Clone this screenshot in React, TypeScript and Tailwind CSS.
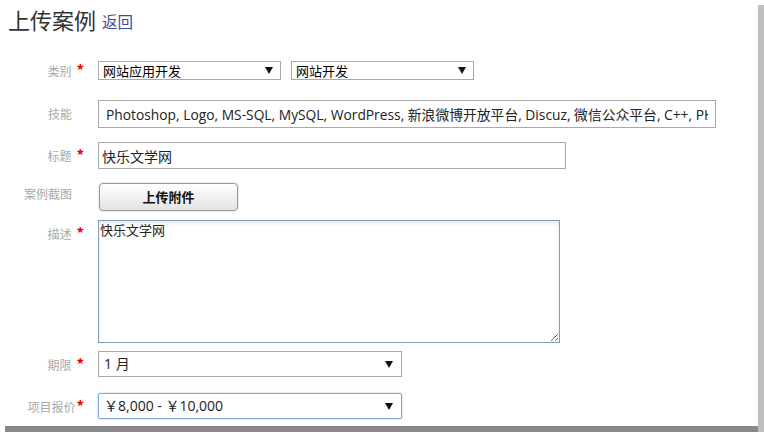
import React from 'react'

const cjk = "font-['Microsoft_YaHei','Noto_Sans_CJK_SC',sans-serif]"

function Arrow() {
  return (
    <svg width="8" height="7" viewBox="0 0 8 7" className="shrink-0">
      <polygon points="0,0 8,0 4,7" fill="#111" />
    </svg>
  )
}

function Label({ text, star, tight }: { text: string; star?: boolean; tight?: boolean }) {
  return (
    <div
      className={`w-[86px] shrink-0 text-right text-[12px] leading-[16px] text-[#a8a8a8] ${cjk} ${
        star ? 'pr-[2px]' : 'pr-[14px]'
      }`}
    >
      {text}
      {star && (
        <span className={`text-[15px] font-bold text-[#ee0000] ${tight ? 'ml-[1px]' : 'ml-[5px]'}`}>*</span>
      )}
    </div>
  )
}

function FakeSelect({
  value,
  className,
  textClass,
}: {
  value: string
  className: string
  textClass: string
}) {
  return (
    <div className={`flex items-center justify-between bg-white ${className}`}>
      <span className={textClass}>{value}</span>
      <Arrow />
    </div>
  )
}

export default function App() {
  const skills =
    'Photoshop, Logo, MS-SQL, MySQL, WordPress, 新浪微博开放平台, Discuz, 微信公众平台, C++, PHP, JavaScript'

  return (
    <div className="w-[764px] h-[432px] flex flex-col bg-white overflow-hidden">
      <div className="flex h-[426px]">
        <div className="w-[758px] h-full bg-white flex flex-col">
          {/* header */}
          <div className="flex items-end pl-[8px] pt-[4px] h-[32px]">
            <span className={`text-[22px] leading-[26px] text-[#333] ${cjk}`}>上传案例</span>
            <span className={`ml-[6px] mb-[1px] text-[15.5px] leading-[20px] text-[#3d4c9e] ${cjk}`}>返回</span>
          </div>

          {/* 类别 */}
          <div className="flex items-center mt-[29px]">
            <Label text="类别" star />
            <div className="flex gap-[10px] ml-[12px]">
              <FakeSelect
                value="网站应用开发"
                className="w-[183px] h-[19px] border border-[#a9a9a9] pl-[4px] pr-[7px]"
                textClass={`text-[13px] leading-[17px] text-black ${cjk}`}
              />
              <FakeSelect
                value="网站开发"
                className="w-[183px] h-[19px] border border-[#a9a9a9] pl-[4px] pr-[7px]"
                textClass={`text-[13px] leading-[17px] text-black ${cjk}`}
              />
            </div>
          </div>

          {/* 技能 */}
          <div className="flex items-center mt-[20px]">
            <Label text="技能" />
            <input
              readOnly
              value={skills}
              className="ml-[12px] w-[618px] h-[28px] border border-[#a9a9a9] px-[7px] text-[13.8px] text-[#222] font-['Open_Sans','Noto_Sans_CJK_SC',sans-serif] outline-none"
            />
          </div>

          {/* 标题 */}
          <div className="flex items-center mt-[14px]">
            <Label text="标题" star />
            <input
              readOnly
              value="快乐文学网"
              className={`ml-[12px] w-[468px] h-[27px] border border-[#a9a9a9] px-[3px] text-[14px] text-[#222] outline-none ${cjk}`}
            />
          </div>

          {/* 案例截图 */}
          <div className="flex items-start mt-[13px]">
            <div className="pt-[4px]">
              <Label text="案例截图" />
            </div>
            <div className="ml-[12px] p-px bg-[#ececec] rounded-[5px]">
              <button
                className={`w-[139px] h-[28px] rounded-[4px] border border-[#9a9a9a] bg-gradient-to-b from-white to-[#e4e4e4] text-[13px] font-bold text-[#111] ${cjk}`}
              >
                上传附件
              </button>
            </div>
          </div>

          {/* 描述 */}
          <div className="flex items-start mt-[8px]">
            <div className="pt-[5px]">
              <Label text="描述" star />
            </div>
            <textarea
              readOnly
              value="快乐文学网"
              className={`ml-[12px] w-[462px] h-[123px] border border-[#7f9db9] px-px pt-[1px] text-[13px] leading-[16px] text-[#222] outline-none shadow-[inset_0_3px_4px_rgba(0,0,0,0.08)] ${cjk}`}
            />
          </div>

          {/* 期限 */}
          <div className="flex items-center mt-[8px]">
            <Label text="期限" star />
            <FakeSelect
              value="1 月"
              className="ml-[12px] w-[304px] h-[26px] border border-[#a9a9a9] pl-[5px] pr-[8px]"
              textClass={`text-[14px] leading-[18px] text-[#222] font-['Open_Sans','Noto_Sans_CJK_SC',sans-serif]`}
            />
          </div>

          {/* 项目报价 */}
          <div className="flex items-center mt-[16px]">
            <Label text="项目报价" star tight />
            <FakeSelect
              value="￥8,000 - ￥10,000"
              className="ml-[12px] w-[304px] h-[26px] border border-[#7ea6e6] rounded-[2px] shadow-[0_0_2px_rgba(90,140,230,0.5)] pl-[5px] pr-[8px]"
              textClass={`text-[14px] leading-[18px] text-[#222] font-['Open_Sans','Noto_Sans_CJK_SC',sans-serif]`}
            />
          </div>
        </div>
        <div className="w-[6px] mt-[5px] bg-[#bfbfbf]" />
      </div>
      <div className="flex h-[6px]">
        <div className="w-[5px] bg-white" />
        <div className="flex-1 bg-[#888888]" />
        <div className="w-[6px] bg-[#bfbfbf]" />
      </div>
    </div>
  )
}
